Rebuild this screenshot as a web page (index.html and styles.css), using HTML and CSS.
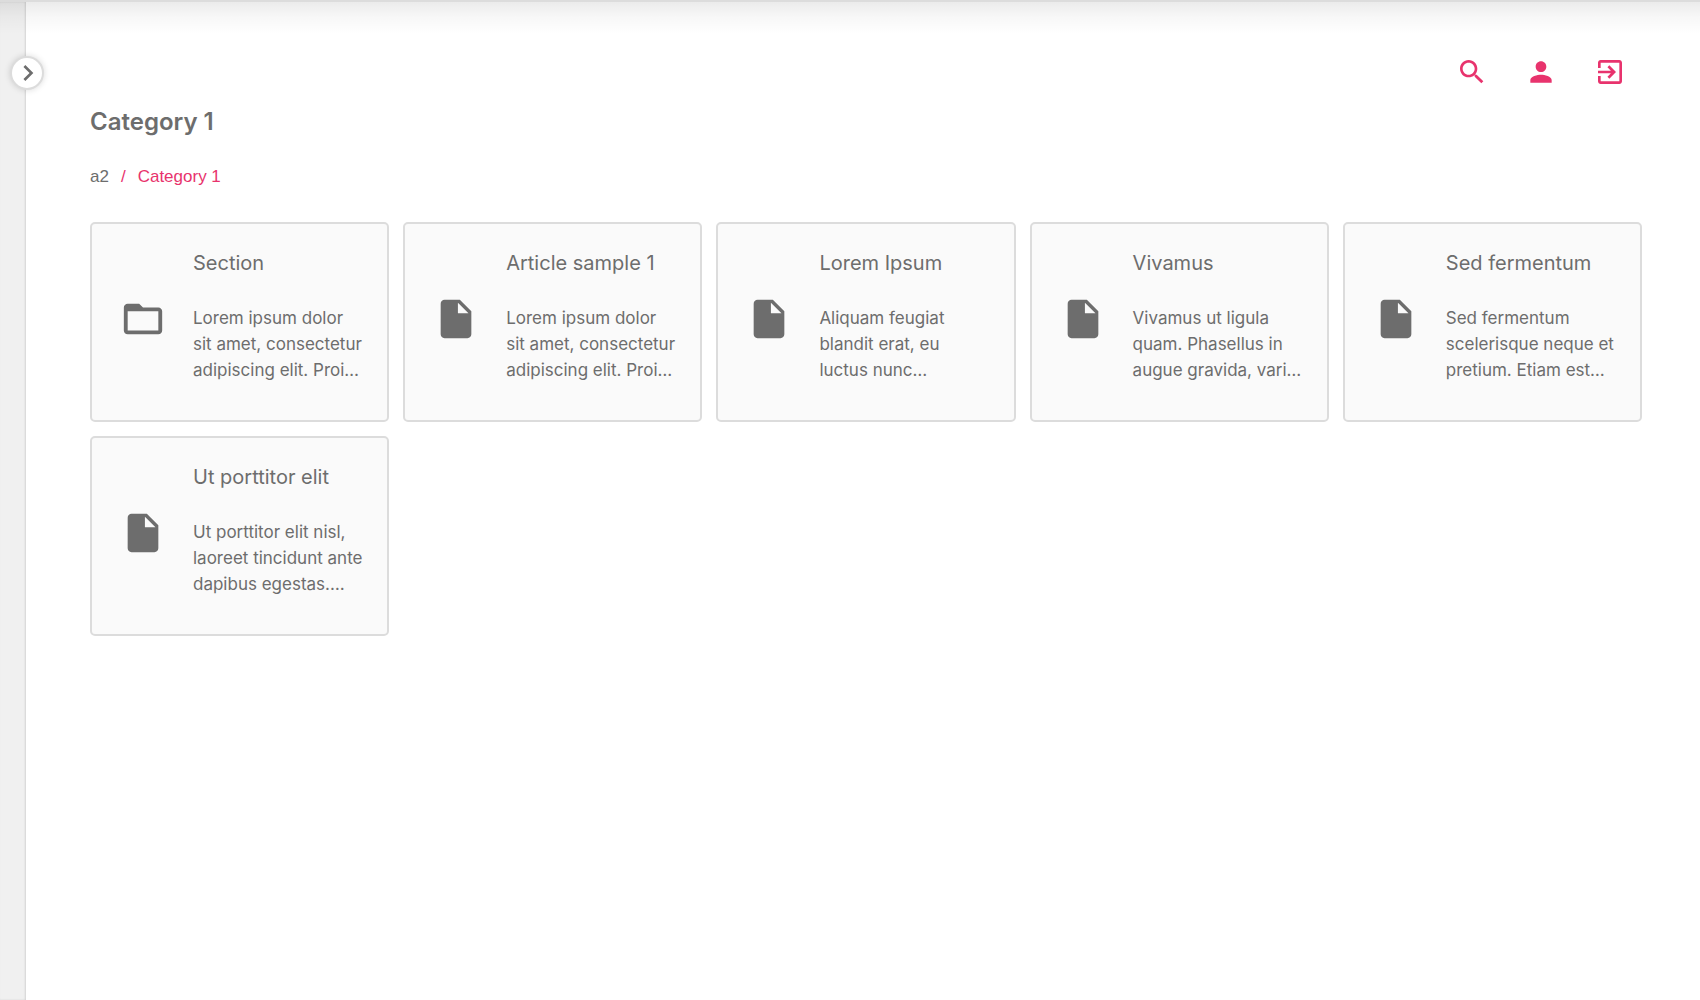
FILE: index.html
```
<!DOCTYPE html>
<html lang="en">

<head>
    <meta charset="utf-8">
    <title>Category 1</title>
    <link rel="stylesheet" href="styles.css">
</head>

<body>
    <!-- icons shared by the cards -->
    <svg class="sprite" aria-hidden="true">
        <symbol id="folder" viewBox="0 0 24 24">
            <path d="M20 6h-8l-2-2H4c-1.100 0-1.990.900-1.990 2L2 18c0 1.100.900 2 2 2h16c1.100 0 2-.900 2-2V8c0-1.100-.900-2-2-2zm0 12H4V8h16v10z" />
        </symbol>
        <symbol id="file" viewBox="0 0 24 24">
            <path d="M6 2c-1.100 0-1.990.900-1.990 2L4 20c0 1.100.890 2 1.990 2H18c1.100 0 2-.900 2-2V8l-6-6H6zm7 7V3.500L18.500 9H13z" />
        </symbol>
    </svg>

    <div class="topbar"></div>

    <div class="layout">
        <aside class="sidebar">
            <button class="toggle" aria-label="Open menu">
                <svg viewBox="0 0 24 24"><path d="M8.590 16.590L13.170 12 8.590 7.410 10 6l6 6-6 6z" /></svg>
            </button>
        </aside>

        <main>
            <nav class="actions">
                <a href="#" aria-label="Search">
                    <svg viewBox="0 0 24 24"><path d="M15.500 14h-.790l-.280-.270C15.410 12.590 16 11.110 16 9.500 16 5.910 13.090 3 9.500 3S3 5.910 3 9.500 5.910 16 9.500 16c1.610 0 3.090-.590 4.230-1.570l.270.280v.790l5 4.990L20.490 19l-4.990-5zm-6 0C7.010 14 5 11.990 5 9.500S7.010 5 9.500 5 14 7.010 14 9.500 11.990 14 9.500 14z" /></svg>
                </a>
                <a href="#" aria-label="Profile">
                    <svg viewBox="0 0 24 24"><path d="M12 12c2.210 0 4-1.790 4-4s-1.790-4-4-4-4 1.790-4 4 1.790 4 4 4zm0 2c-2.670 0-8 1.340-8 4v2h16v-2c0-2.660-5.330-4-8-4z" /></svg>
                </a>
                <a href="#" aria-label="Log out">
                    <svg viewBox="0 0 24 24"><path d="M10.090 15.590L11.500 17l5-5-5-5-1.410 1.410L12.670 11H3v2h9.670l-2.580 2.590zM19 3H5c-1.110 0-2 .900-2 2v4h2V5h14v14H5v-4H3v4c0 1.100.890 2 2 2h14c1.100 0 2-.900 2-2V5c0-1.100-.900-2-2-2z" /></svg>
                </a>
            </nav>

            <h1>Category 1</h1>

            <nav class="breadcrumb">
                <a href="#">a2</a>
                <span>/</span>
                <a href="#" class="current">Category 1</a>
            </nav>

            <div class="cards">
                <a href="#" class="card">
                    <svg><use href="#folder" /></svg>
                    <div class="text">
                        <h2>Section</h2>
                        <p>Lorem ipsum dolor<br>sit amet, consectetur<br>adipiscing elit. Proi…</p>
                    </div>
                </a>
                <a href="#" class="card">
                    <svg><use href="#file" /></svg>
                    <div class="text">
                        <h2>Article sample 1</h2>
                        <p>Lorem ipsum dolor<br>sit amet, consectetur<br>adipiscing elit. Proi…</p>
                    </div>
                </a>
                <a href="#" class="card">
                    <svg><use href="#file" /></svg>
                    <div class="text">
                        <h2>Lorem Ipsum</h2>
                        <p>Aliquam feugiat<br>blandit erat, eu<br>luctus nunc…</p>
                    </div>
                </a>
                <a href="#" class="card">
                    <svg><use href="#file" /></svg>
                    <div class="text">
                        <h2>Vivamus</h2>
                        <p>Vivamus ut ligula<br>quam. Phasellus in<br>augue gravida, vari…</p>
                    </div>
                </a>
                <a href="#" class="card">
                    <svg><use href="#file" /></svg>
                    <div class="text">
                        <h2>Sed fermentum</h2>
                        <p>Sed fermentum<br>scelerisque neque et<br>pretium. Etiam est…</p>
                    </div>
                </a>
                <a href="#" class="card">
                    <svg><use href="#file" /></svg>
                    <div class="text">
                        <h2>Ut porttitor elit</h2>
                        <p>Ut porttitor elit nisl,<br>laoreet tincidunt ante<br>dapibus egestas.…</p>
                    </div>
                </a>
            </div>
        </main>
    </div>
</body>

</html>
```
FILE: styles.css
```
* {
    box-sizing: border-box;
}

body {
    margin: 0;
    min-height: 100vh;
    display: flex;
    flex-direction: column;
    font-family: Inter, "Liberation Sans", sans-serif;
    color: #6d6d6d;
    background: #fff;
}

a {
    color: inherit;
    text-decoration: none;
}

svg {
    display: block;
    fill: currentColor;
}

.sprite {
    display: none;
}

.topbar {
    position: relative;
    z-index: 2;
    height: 2px;
    background: #dcdcdc;
}

/* soft shadow under the bar */
.topbar:after {
    content: "";
    position: absolute;
    top: 100%;
    left: 0;
    right: 0;
    height: 32px;
    background: linear-gradient(rgba(0, 0, 0, .08), rgba(0, 0, 0, .03) 45%, transparent);
    pointer-events: none;
}

.layout {
    flex: 1;
    display: flex;
}

.sidebar {
    position: relative;
    width: 26px;
    flex-shrink: 0;
    background: #f0f0f0;
    box-shadow: inset -1px 0 2px rgba(0, 0, 0, .12);
}

/* sits over the edge between sidebar and content */
.toggle {
    position: absolute;
    top: 54px;
    left: 10px;
    width: 34px;
    height: 34px;
    padding: 0 0 0 2px;
    display: flex;
    align-items: center;
    justify-content: center;
    color: #6d6d6d;
    background: #fff;
    border: 2px solid #dcdcdc;
    border-radius: 50%;
    box-shadow: 0 0 6px rgba(0, 0, 0, .15);
    cursor: pointer;
}

.toggle svg {
    flex-shrink: 0;
    width: 32px;
    height: 32px;
}

main {
    flex: 1;
    padding: 54px 58px 54px 64px;
}

.actions {
    display: flex;
    justify-content: flex-end;
    gap: 37px;
    padding-right: 16px;
    color: #e8336d;
}

.actions svg {
    width: 32px;
    height: 32px;
}

h1 {
    margin: 18px 0 0;
    font-size: 24px;
    line-height: 32px;
    font-weight: 600;
}

.breadcrumb {
    display: flex;
    gap: 12px;
    margin: 27px 0 33px;
    font-family: "Liberation Sans", sans-serif;
    font-size: 17px;
    line-height: 24px;
}

.breadcrumb span,
.breadcrumb .current {
    color: #e8336d;
}

.cards {
    display: grid;
    grid-template-columns: repeat(5, 1fr);
    gap: 14px;
}

.card {
    display: flex;
    align-items: flex-start;
    gap: 27px;
    min-height: 200px;
    padding: 24px 20px 24px 28px;
    background: #fafafa;
    border: 2px solid #dcdcdc;
    border-radius: 5px;
}

.card svg {
    flex-shrink: 0;
    width: 46px;
    height: 46px;
    margin-top: 48px;
}

.card h2 {
    margin: 0 0 27px;
    font-size: 20px;
    line-height: 30px;
    font-weight: 400;
}

.card p {
    margin: 0;
    font-size: 17px;
    line-height: 26px;
    white-space: nowrap;
}
```
